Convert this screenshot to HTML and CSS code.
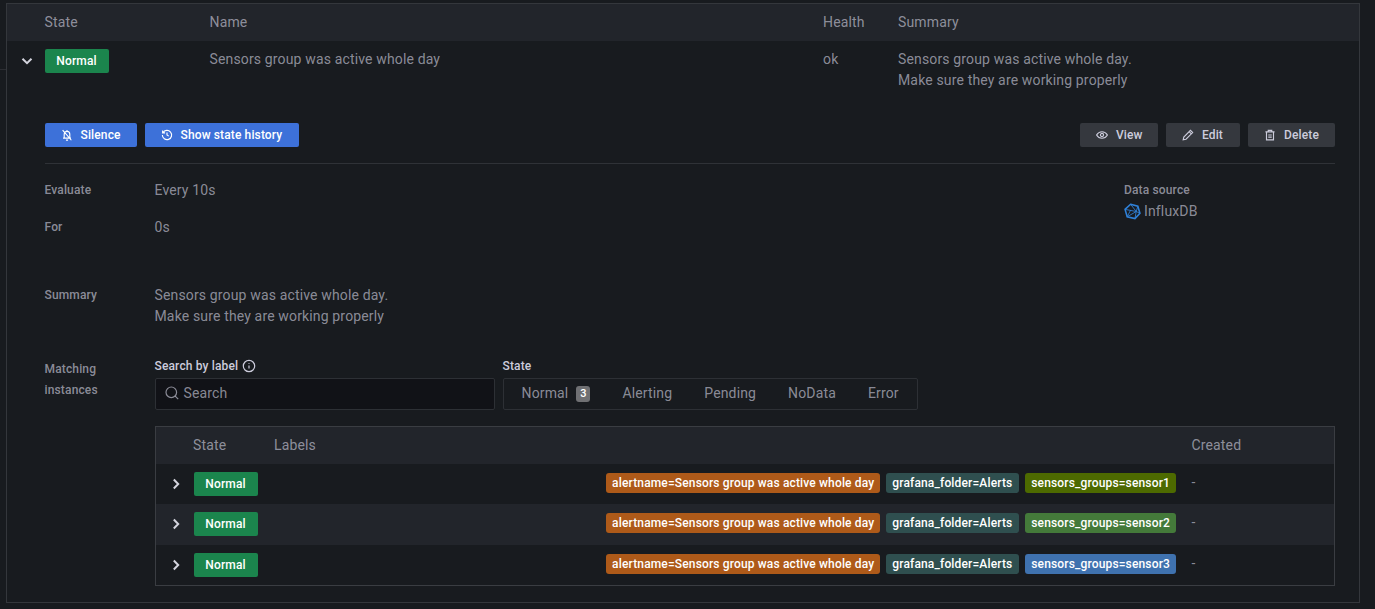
FILE: index.html
```html
<!DOCTYPE html>
<html lang="en">
<head>
<meta charset="utf-8">
<title>Alert rule</title>
<link rel="stylesheet" href="styles.css">
</head>
<body>
<main class="panel">
  <div class="rule-grid rule-head">
    <span></span><span>State</span><span>Name</span><span>Health</span><span>Summary</span>
  </div>
  <div class="rule-grid rule-row">
    <span class="chev-cell"><svg class="chev" viewBox="0 0 16 16"><path d="M3.5 5.8 8 10.2l4.5-4.4"/></svg></span>
    <span><span class="badge">Normal</span></span>
    <span>Sensors group was active whole day</span>
    <span>ok</span>
    <span>Sensors group was active whole day.<br>Make sure they are working properly</span>
  </div>
  <section class="details">
    <div class="actions">
      <div class="btn-group">
        <button class="btn primary silence"><svg class="ico" viewBox="0 0 16 16"><path d="M4.800 11.500V7.200C4.800 5.300 6.200 3.800 8 3.800s3.200 1.500 3.200 3.400v4.300M3.500 11.500h9M6.800 13.800h2.400M8 2.200v1.600M3 2.500l10 11.500"/></svg>Silence</button>
        <button class="btn primary history"><svg class="ico" viewBox="0 0 16 16"><path d="M3.400 5.400A5.300 5.300 0 1 1 2.700 8M3 2.800v2.800h2.800M8 5.200V8l2 1.300"/></svg>Show state history</button>
      </div>
      <div class="btn-group">
        <button class="btn secondary view"><svg class="ico" viewBox="0 0 16 16"><path d="M1.800 8C3.200 5.600 5.400 4.300 8 4.300s4.800 1.300 6.200 3.700C12.800 10.400 10.600 11.700 8 11.700S3.200 10.400 1.800 8Z"/><circle cx="8" cy="8" r="1.800"/></svg>View</button>
        <button class="btn secondary edit"><svg class="ico" viewBox="0 0 16 16"><path d="M2.500 13.500l.7-3.200L10.800 2.700l2.500 2.500-7.600 7.600-3.200.7ZM9.300 4.200l2.500 2.500"/></svg>Edit</button>
        <button class="btn secondary delete"><svg class="ico" viewBox="0 0 16 16"><path d="M2.800 4.500h10.400M6 4.500V2.700h4v1.800M4 4.500v9h8v-9M6 8h4M6 10.500h4"/></svg>Delete</button>
      </div>
    </div>
    <div class="meta">
      <div class="meta-main">
        <div class="meta-row"><span class="label">Evaluate</span><span>Every 10s</span></div>
        <div class="meta-row"><span class="label">For</span><span>0s</span></div>
      </div>
      <div class="source">
        <span class="label">Data source</span>
        <span class="source-name"><svg class="influx" viewBox="0 0 16 16"><path class="influx-outer" d="M6.200 1.200 13 3l2 6.700-4.700 5L3 13 1 6Z"/><path d="M6.200 1.200 11.500 8M1 6l10.500 2M3 13l3.200-6.300M13 3l-1.500 5M15 9.700l-3.500-1.700M10.300 14.700l1.200-6.700M3 13l8.500-5"/></svg>InfluxDB</span>
      </div>
    </div>
    <div class="meta-row summary-row"><span class="label">Summary</span><span>Sensors group was active whole day.<br>Make sure they are working properly</span></div>
    <div class="meta-row instances">
      <span class="label">Matching<br>instances</span>
      <div class="instances-body">
        <div class="filters">
          <div class="search-field">
            <div class="field-label">Search by label<svg class="info" viewBox="0 0 16 16"><circle cx="8" cy="8" r="5.700"/><path d="M8 7.600v3M8 5.200v.8"/></svg></div>
            <div class="search-input"><svg class="search-ico" viewBox="0 0 16 16"><circle cx="7.300" cy="7.300" r="5.300"/><path d="m11.200 11.200 3 3"/></svg><span>Search</span></div>
          </div>
          <div class="state-field">
            <div class="field-label">State</div>
            <div class="tabs">
              <span class="tab">Normal<span class="count">3</span></span>
              <span class="tab">Alerting</span>
              <span class="tab">Pending</span>
              <span class="tab">NoData</span>
              <span class="tab">Error</span>
            </div>
          </div>
        </div>
        <div class="inst-table">
          <div class="inst-grid inst-head"><span></span><span>State</span><span>Labels</span><span>Created</span></div>
          <div class="inst-grid inst-row">
            <span class="chev-cell"><svg class="chev" viewBox="0 0 16 16"><path d="M5.800 3.500 10.200 8l-4.400 4.500"/></svg></span>
            <span class="badge">Normal</span>
            <span class="tags"><span class="tag orange">alertname=Sensors group was active whole day</span><span class="tag teal">grafana_folder=Alerts</span><span class="tag olive">sensors_groups=sensor1</span></span>
            <span class="dash">-</span>
          </div>
          <div class="inst-grid inst-row alt">
            <span class="chev-cell"><svg class="chev" viewBox="0 0 16 16"><path d="M5.800 3.500 10.200 8l-4.400 4.500"/></svg></span>
            <span class="badge">Normal</span>
            <span class="tags"><span class="tag orange">alertname=Sensors group was active whole day</span><span class="tag teal">grafana_folder=Alerts</span><span class="tag green">sensors_groups=sensor2</span></span>
            <span class="dash">-</span>
          </div>
          <div class="inst-grid inst-row">
            <span class="chev-cell"><svg class="chev" viewBox="0 0 16 16"><path d="M5.800 3.500 10.200 8l-4.400 4.500"/></svg></span>
            <span class="badge">Normal</span>
            <span class="tags"><span class="tag orange">alertname=Sensors group was active whole day</span><span class="tag teal">grafana_folder=Alerts</span><span class="tag blue">sensors_groups=sensor3</span></span>
            <span class="dash">-</span>
          </div>
        </div>
      </div>
    </div>
  </section>
</main>
</body>
</html>
```
FILE: styles.css
```css
* { box-sizing: border-box; }
html, body { height: 100%; }
body {
  margin: 0;
  padding: 3px 15px 0 6px;
  background: #181b1f;
  color: rgba(204, 204, 220, 0.65);
  font: 400 14px/21px Roboto, sans-serif;
  letter-spacing: 0.01071em;
  overflow: hidden;
  position: relative;
}
body::before {
  content: "";
  position: absolute;
  left: 0;
  top: 69px;
  width: 6px;
  height: 1px;
  background: #2c2e33;
}
.panel {
  width: 1354px;
  height: 600px;
  border: 1px solid #34373c;
}
.rule-grid {
  display: grid;
  grid-template-columns: 37.5px 165px 613.5px 75px 1fr;
}
.rule-head {
  height: 37px;
  align-items: center;
  background: #22252b;
}
.rule-row {
  padding-top: 8px;
  height: 50px;
  margin-bottom: 32px;
}
.chev-cell {
  display: flex;
  align-items: center;
  justify-content: center;
  padding-left: 3px;
}
.rule-row .chev-cell { height: 24px; padding-left: 2px; }
.chev {
  width: 16px;
  height: 16px;
  fill: none;
  stroke: #d4d4de;
  stroke-width: 2;
}
.badge {
  display: block;
  width: 64px;
  height: 24px;
  background: #1b854d;
  border-radius: 2px;
  color: #fff;
  font-size: 12px;
  font-weight: 500;
  line-height: 24px;
  text-align: center;
}
.details { padding: 0 24px 0 37.5px; }
.actions {
  display: flex;
  justify-content: space-between;
  padding-bottom: 16px;
  border-bottom: 1px solid #2f3237;
}
.btn-group { display: flex; gap: 8px; }
.btn {
  display: flex;
  align-items: center;
  height: 24px;
  padding: 0 0 0 15px;
  border: 0;
  border-radius: 2px;
  font: 500 12px/24px Roboto, sans-serif;
  letter-spacing: 0.01071em;
  color: #fff;
}
.btn.primary { background: #3d71d9; }
.btn.secondary { background: #35383e; color: #ccccdc; }
.ico {
  width: 14px;
  height: 14px;
  margin-right: 7px;
  fill: none;
  stroke: currentColor;
  stroke-width: 1.300;
  flex: none;
}
.silence { width: 92px; }
.history { width: 154px; }
.view { width: 78px; }
.edit { width: 74px; }
.delete { width: 87px; }
.meta {
  display: flex;
  justify-content: space-between;
  padding-top: 16px;
}
.meta-main { display: flex; flex-direction: column; gap: 16px; }
.meta-row { display: flex; }
.label {
  flex: none;
  width: 110px;
  font-size: 12px;
  font-weight: 500;
  line-height: 21px;
}
.source {
  width: 211px;
  display: flex;
  flex-direction: column;
  margin-top: 1px;
}
.source .label { line-height: 19px; }
.source-name {
  display: flex;
  align-items: center;
  gap: 3px;
  line-height: 22px;
}
.influx {
  width: 17px;
  height: 17px;
  fill: none;
  stroke: #2f81d8;
  stroke-width: 0.800;
}
.influx-outer { stroke-width: 1.500; }
.summary-row { margin-top: 47px; }
.instances { margin-top: 32px; }
.instances-body { flex: 1; margin-top: -2px; }
.filters { display: flex; gap: 8px; }
.field-label {
  display: flex;
  align-items: center;
  gap: 3px;
  height: 18px;
  color: #ccccdc;
  font-size: 12px;
  font-weight: 500;
  line-height: 18px;
}
.info {
  width: 16px;
  height: 16px;
  fill: none;
  stroke: #ccccdc;
  stroke-width: 1.200;
}
.search-input {
  display: flex;
  align-items: center;
  gap: 4px;
  width: 340px;
  height: 32px;
  margin-top: 3px;
  padding: 0 0 2px 8px;
  background: #111217;
  border: 1px solid #2d3035;
  border-radius: 2px;
}
.search-ico {
  width: 16px;
  height: 16px;
  fill: none;
  stroke: rgba(204, 204, 220, 0.65);
  stroke-width: 1.200;
}
.tabs {
  display: flex;
  align-items: center;
  gap: 32px;
  height: 32px;
  margin-top: 3px;
  padding: 0 0 2px 18px;
  width: 415px;
  border: 1px solid #2d3035;
  border-radius: 2px;
}
.tab { display: flex; align-items: center; gap: 8px; }
.count {
  width: 14px;
  height: 16px;
  margin-top: 2px;
  border-radius: 3px;
  background: #6f7073;
  color: #fff;
  font-size: 11px;
  font-weight: 500;
  line-height: 16px;
  text-align: center;
}
.inst-table {
  width: 1180px;
  height: 160px;
  margin-top: 16px;
  border: 1px solid #3a3d42;
}
.inst-grid {
  display: grid;
  grid-template-columns: 37.5px 81px 917.5px 1fr;
  align-items: center;
}
.inst-head { height: 37px; background: #22252b; }
.inst-row { height: 40px; }
.inst-row .badge { margin-left: 0.5px; }
.inst-row.alt { height: 41px; padding-bottom: 1px; background: #22252b; }
.tags {
  display: flex;
  justify-content: flex-end;
  gap: 6px;
  padding-right: 15.5px;
  margin-top: -2px;
}
.tag {
  height: 20px;
  padding: 0 6px;
  border-radius: 3px;
  color: #fff;
  font-size: 12px;
  font-weight: 500;
  line-height: 20px;
  white-space: nowrap;
}
.orange { background: #ae5a19; }
.teal { background: #2f4f4f; width: 133px; }
.olive { background: #4d6a00; }
.green { background: #447a3a; }
.blue { background: #3f72af; }
.dash { margin-top: -4px; }
```
